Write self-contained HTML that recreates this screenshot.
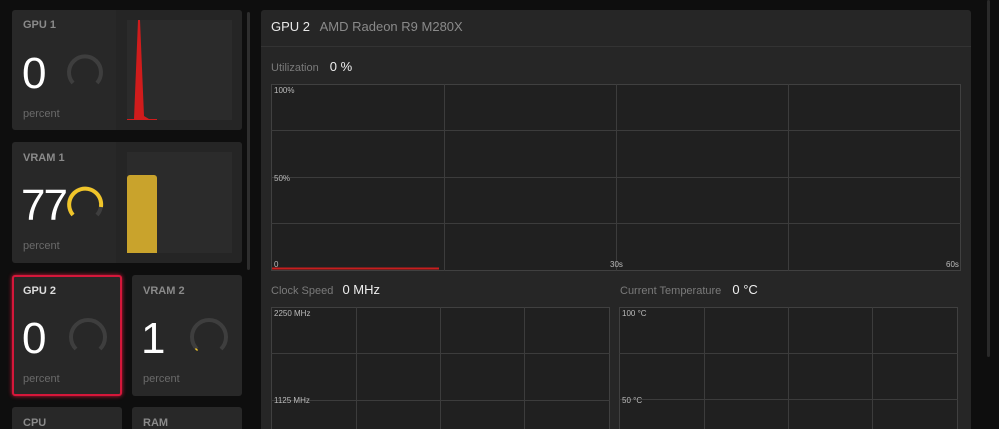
<!DOCTYPE html><html><head><style>
*{margin:0;padding:0;box-sizing:border-box}
html,body{width:999px;height:429px;overflow:hidden}
body{background:#0e0e0e;position:relative;font-family:"Liberation Sans",sans-serif}
.a{position:absolute}
.card{position:absolute;background:#282828;border-radius:3px}
.lbl{position:absolute;font-size:11px;color:#8a8a8a;font-weight:bold}
.big{position:absolute;font-size:44px;color:#fff;font-family:"Liberation Sans",sans-serif;line-height:1}
.pc{position:absolute;font-size:11px;color:#6a6a6a}
.t{font-size:8px;fill:#bbb;font-family:"Liberation Sans",sans-serif}
</style></head><body>
<!-- GPU1 -->
<div class="card" style="left:12px;top:10px;width:230px;height:120px"></div>
<div class="a" style="left:116px;top:10px;width:126px;height:120px;background:#252525;border-radius:0 3px 3px 0"></div>
<div class="a" style="left:127px;top:20px;width:105px;height:100px;background:#2b2b2b"></div>
<svg class="a" style="left:127px;top:20px" width="105" height="100"><polygon points="0,100 7,99 11,0 13,0 17,96 22,99 28,100" fill="#d01c1c"/><line x1="0" y1="99.5" x2="30" y2="99.5" stroke="#d01c1c"/></svg>
<div class="lbl" style="left:23px;top:19px">GPU 1</div>
<div class="big" style="left:22px;top:52px">0</div>
<svg class="a" style="left:64px;top:50px" width="42" height="42"><path d="M9 33 A16 16 0 1 1 33 33" fill="none" stroke="#3e3e3e" stroke-width="4"/></svg>
<div class="pc" style="left:23px;top:108px">percent</div>
<!-- VRAM1 -->
<div class="card" style="left:12px;top:142px;width:230px;height:121px"></div>
<div class="a" style="left:116px;top:142px;width:126px;height:121px;background:#252525;border-radius:0 3px 3px 0"></div>
<div class="a" style="left:127px;top:152px;width:105px;height:101px;background:#2b2b2b"></div>
<div class="a" style="left:127px;top:175px;width:30px;height:78px;background:#c9a32c;border-radius:3px 3px 0 0"></div>
<div class="lbl" style="left:23px;top:152px">VRAM 1</div>
<div class="big" style="left:21px;top:184px;letter-spacing:-2px">77</div>
<svg class="a" style="left:64px;top:182px" width="42" height="42"><path d="M9 33 A16 16 0 1 1 33 33" fill="none" stroke="#3e3e3e" stroke-width="4"/><path d="M9 33 A16 16 0 1 1 37 25" fill="none" stroke="#f0c52a" stroke-width="4"/></svg>
<div class="pc" style="left:23px;top:240px">percent</div>
<!-- GPU2 -->
<div class="card" style="left:12px;top:275px;width:110px;height:121px;border:2px solid #d5173a;box-shadow:0 0 4px #d5173a"></div>
<div class="lbl" style="left:23px;top:285px;color:#ddd">GPU 2</div>
<div class="big" style="left:22px;top:317px">0</div>
<svg class="a" style="left:66px;top:314px" width="44" height="44"><path d="M10 35 A17 17 0 1 1 34 35" fill="none" stroke="#3e3e3e" stroke-width="4"/></svg>
<div class="pc" style="left:23px;top:373px">percent</div>
<!-- VRAM2 -->
<div class="card" style="left:132px;top:275px;width:110px;height:121px"></div>
<div class="lbl" style="left:143px;top:285px">VRAM 2</div>
<div class="big" style="left:141px;top:317px">1</div>
<svg class="a" style="left:187px;top:314px" width="44" height="44"><path d="M10 35 A17 17 0 1 1 34 35" fill="none" stroke="#3e3e3e" stroke-width="4"/><path d="M10 35 L9 36" stroke="#f0c52a" stroke-width="3"/></svg>
<div class="pc" style="left:143px;top:373px">percent</div>
<!-- CPU RAM -->
<div class="card" style="left:12px;top:407px;width:110px;height:30px"></div>
<div class="lbl" style="left:23px;top:417px">CPU</div>
<div class="card" style="left:132px;top:407px;width:110px;height:30px"></div>
<div class="lbl" style="left:143px;top:417px">RAM</div>
<div class="a" style="left:247px;top:12px;width:3px;height:258px;background:#2e2e2e;border-radius:2px"></div>
<!-- main panel -->
<div class="card" style="left:261px;top:10px;width:710px;height:430px;background:#262626"></div>
<div class="a" style="left:261px;top:46px;width:710px;height:1px;background:#333"></div>
<div class="a" style="left:271px;top:19px;font-size:13px;color:#e8e8e8">GPU 2 <span style="color:#8a8a8a;margin-left:6px">AMD Radeon R9 M280X</span></div>
<div class="a" style="left:271px;top:59px;font-size:11px;color:#7a7a7a">Utilization <span style="color:#eee;font-size:13px;margin-left:8px">0 %</span></div>
<svg class="a" style="left:271px;top:84px" width="690" height="187">
<rect x="0.5" y="0.5" width="689" height="186" fill="#202020" stroke="#404040"/>
<g stroke="#3c3c3c"><line x1="173.5" y1="0" x2="173.5" y2="187"/><line x1="345.5" y1="0" x2="345.5" y2="187"/><line x1="517.5" y1="0" x2="517.5" y2="187"/><line x1="0" y1="46.5" x2="690" y2="46.5"/><line x1="0" y1="93.5" x2="690" y2="93.5"/><line x1="0" y1="139.5" x2="690" y2="139.5"/></g>
<line x1="1" y1="184.5" x2="168" y2="184.5" stroke="#c81e1e" stroke-width="2"/>
<text class="t" x="3" y="9">100%</text><text class="t" x="3" y="97">50%</text><text class="t" x="3" y="183">0</text><text class="t" x="339" y="183">30s</text><text class="t" x="675" y="183">60s</text></svg>
<div class="a" style="left:271px;top:282px;font-size:11px;color:#7a7a7a">Clock Speed <span style="color:#eee;font-size:13px;margin-left:6px">0 MHz</span></div>
<div class="a" style="left:620px;top:282px;font-size:11px;color:#7a7a7a">Current Temperature <span style="color:#eee;font-size:13px;margin-left:8px">0 °C</span></div>
<svg class="a" style="left:271px;top:307px" width="339" height="130">
<rect x="0.5" y="0.5" width="338" height="130" fill="#202020" stroke="#404040"/>
<g stroke="#3c3c3c"><line x1="85.5" y1="0" x2="85.5" y2="130"/><line x1="169.5" y1="0" x2="169.5" y2="130"/><line x1="253.5" y1="0" x2="253.5" y2="130"/><line x1="0" y1="46.5" x2="339" y2="46.5"/><line x1="0" y1="93.5" x2="339" y2="93.5"/></g>
<text class="t" x="3" y="9">2250 MHz</text><text class="t" x="3" y="96">1125 MHz</text></svg>
<svg class="a" style="left:619px;top:307px" width="339" height="130">
<rect x="0.5" y="0.5" width="338" height="130" fill="#202020" stroke="#404040"/>
<g stroke="#3c3c3c"><line x1="85.5" y1="0" x2="85.5" y2="130"/><line x1="169.5" y1="0" x2="169.5" y2="130"/><line x1="253.5" y1="0" x2="253.5" y2="130"/><line x1="0" y1="46.5" x2="339" y2="46.5"/><line x1="0" y1="92.5" x2="339" y2="92.5"/></g>
<text class="t" x="3" y="9">100 °C</text><text class="t" x="3" y="96">50 °C</text></svg>
<div class="a" style="left:987px;top:0;width:3px;height:357px;background:#2a2a2a;border-radius:2px"></div>
</body></html>
